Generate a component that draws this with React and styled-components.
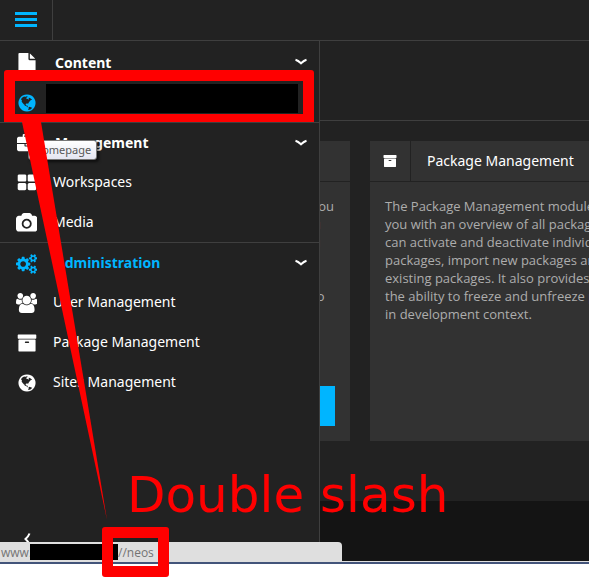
import React from "react";
import styled, { createGlobalStyle, css } from "styled-components";

const colors = {
  panel: "#222222",
  card: "#323232",
  line: "#3f3f3f",
  footer: "#141414",
  accent: "#00b5ff",
  mark: "#ff0000",
};

const GlobalStyle = createGlobalStyle`
  *, *::before, *::after { box-sizing: border-box; }
  body {
    margin: 0;
    background: #ffffff;
    font-family: "Noto Sans", "Open Sans", sans-serif;
    font-size: 14px;
    color: #ffffff;
  }
  button, a { font: inherit; color: inherit; text-decoration: none; }
  h2, p, ul { margin: 0; padding: 0; }
`;

const glyphs = {
  file: [1792, "M1152 512v-472q22 14 36 28l408 408q14 14 28 36h-472zm-128 32q0 40 28 68t68 28h544v1056q0 40-28 68t-68 28h-1344q-40 0-68-28t-28-68v-1600q0-40 28-68t68-28h800v544z"],
  globe: [1792, "M896 128q209 0 385.5 103t279.5 279.5 103 385.5-103 385.5-279.5 279.5-385.5 103-385.5-103-279.5-279.5-103-385.5 103-385.5 279.5-279.5 385.5-103zm274 521q-2 1-9.5 9.5t-13.5 9.5q2 0 4.5-5t5-11 3.5-7q6-7 22-15 14-6 52-12 34-8 51 11-2-2 9.5-13t14.5-12q3-2 15-4.5t15-7.5l2-22q-12 1-17.5-7t-6.5-21q0 2-6 8 0-7-4.5-8t-11.5 1-9 1q-10-3-15-7.5t-8-16.5-4-15q-2-5-9.5-11t-9.5-10q-1-2-2.5-5.5t-3-6.5-4-5.5-5.5-2.5-7 5-7.5 10-4.5 5q-3-2-6-1.5t-4.5 1-4.5 3-5 3.5q-3 2-8.5 3t-8.5 2q15-5-1-11-10-4-16-3 9-4 7.5-12t-8.5-14h5q-1-4-8.5-8.5t-17.5-8.5-13-6q-8-5-34-9.5t-33-.5q-5 6-4.5 10.5t4 14 3.5 12.5q1 6-5.5 13t-6.5 12q0 7 14 15.5t10 21.5q-3 8-16 16t-16 12q-5 8-1.5 18.5t10.5 16.5q2 2 1.5 4t-3.5 4.5-5.5 4-6.5 3.5l-3 2q-11 5-20.5-6t-13.5-26q-7-25-16-30-23-8-29 1-5-13-41-26-25-9-58-4 6-1 0-15-7-15-19-12 3-6 4-17.5t1-13.5q3-13 12-23 1-1 7-8.5t9.5-13.5.5-6q35 4 50-11 5-5 11.5-17t10.5-17q9-6 14-5.5t14.5 5.5 14.5 5q14 1 15.5-11t-7.5-20q12 1 3-17-4-7-8-9-12-4-27 5-8 4 2 8-1-1-9.5 10.5t-16.5 17.5-16-5q-1-1-5.5-13.5t-9.5-13.5q-8 0-16 15 3-8-11-15t-24-8q19-12-8-27-7-4-20.5-5t-19.5 4q-5 7-5.5 11.5t5 8 10.5 5.5 11.5 4 8.5 3q14 10 8 14-2 1-8.5 3.5t-11.5 4.5-6 4q-3 4 0 14t-2 14q-5-5-9-17.5t-7-16.5q7 9-25 6l-10-1q-4 0-16 2t-20.5 1-13.5-8q-4-8 0-20 1-4 4-2-4-3-11-9.5t-10-8.5q-46 15-94 41 6 1 12-1 5-2 13-6.5t10-5.5q34-14 42-7l5-5q14 16 20 25-7-4-30-1-20 6-22 12 7 12 5 18-4-3-11.5-10t-14.5-11-15-5q-16 0-22 1-146 80-235 222 7 7 12 8 4 1 5 9t2.5 11 11.5-3q9 8 3 19 1-1 44 27 19 17 21 21 3 11-10 18-1-2-9-9t-9-4q-3 5 .5 18.5t10.5 12.5q-7 0-9.5 16t-2.5 35.5-1 23.5l2 1q-3 12 5.5 34.5t21.5 19.5q-13 3 20 43 6 8 8 9 3 2 12 7.5t15 10 10 10.5q4 5 10 22.5t14 23.5q-2 6 9.5 20t10.5 23q-1 0-2.5 1t-2.5 1q3 7 15.5 14t15.5 13q1 3 2 10t3 11 8 2q2-20-24-62-15-25-17-29-3-5-5.5-15.5t-4.5-14.5q2 0 6 1.5t8.5 3.5 7.5 4 2 3q-3 7 2 17.5t12 18.5 17 19 12 13q6 6 14 19.5t0 13.5q9 0 20 10t17 20q5 8 8 26t5 24q2 7 8.5 13.5t12.5 9.5l16 8 13 7q5 2 18.5 10.5t21.5 11.5q10 4 16 4t14.5-2.5 13.5-3.5q15-2 29 15t21 21q36 19 55 11-2 1 .5 7.5t8 15.5 9 14.5 5.5 8.5q5 6 18 15t18 15q6-4 7-9-3 8 7 20t18 10q14-3 14-32-31 15-49-18 0-1-2.5-5.5t-4-8.5-2.5-8.5 0-7.5 5-3q9 0 10-3.5t-2-12.5-4-13q-1-8-11-20t-12-15q-5 9-16 8t-16-9q0 1-1.5 5.5t-1.5 6.5q-13 0-15-1 1-3 2.5-17.5t3.5-22.5q1-4 5.5-12t7.5-14.5 4-12.5-4.5-9.5-17.5-2.5q-19 1-26 20-1 3-3 10.5t-5 11.5-9 7q-7 3-24 2t-24-5q-13-8-22.5-29t-9.5-37q0-10 2.5-26.5t3-25-5.5-24.5q3-2 9-9.5t10-10.5q2-1 4.5-1.5t4.5 0 4-1.5 3-6q-1-1-4-3-3-3-4-3 7 3 28.5-1.5t27.5 1.5q15 11 22-2 0-1-2.5-9.5t-.5-13.5q5 27 29 9 3 3 15.5 5t17.5 5q3 2 7 5.5t5.5 4.5 5-.5 8.5-6.5q10 14 12 24 11 40 19 44 7 3 11 2t4.5-9.5 0-14-1.5-12.5l-1-8v-18l-1-8q-15-3-18.5-12t1.5-18.5 15-18.5q1-1 8-3.5t15.5-6.5 12.5-8q21-19 15-35 7 0 11-9-1 0-5-3t-7.5-5-4.5-2q9-5 2-16 5-3 7.5-11t7.5-10q9 12 21 2 7-8 1-16 5-7 20.5-10.5t18.5-9.5q7 2 8-2t1-12 3-12q4-5 15-9t13-5l17-11q3-4 0-4 18 2 31-11 10-11-6-20 3-6-3-9.5t-15-5.5q3-1 11.5-.5t10.5-1.5q15-10-7-16-17-5-43 12zm-163 877q206-36 351-189-3-3-12.5-4.5t-12.5-3.5q-18-7-24-8 1-7-2.5-13t-8-9-12.5-8-11-7q-2-2-7-6t-7-5.5-7.5-4.5-8.5-2-10 1l-3 1q-3 1-5.5 2.5t-5.5 3-4 3 0 2.5q-21-17-36-22-5-1-11-5.5t-10.5-7-10-1.5-11.5 7q-5 5-6 15t-2 13q-7-5 0-17.5t2-18.5q-3-6-10.5-4.5t-12 4.5-11.5 8.5-9 6.5-8.5 5.5-8.5 7.5q-3 4-6 12t-5 11q-2-4-11.5-6.5t-9.5-5.5q2 10 4 35t5 38q7 31-12 48-27 25-29 40-4 22 12 26 0 7-8 20.5t-7 21.5q0 6 2 16z"],
  briefcase: [1792, "M640 256h512v-128h-512v128zm1152 640v480q0 66-47 113t-113 47h-1472q-66 0-113-47t-47-113v-480h672v160q0 26 19 45t45 19h320q26 0 45-19t19-45v-160h672zm-768 0v128h-256v-128h256zm768-480v384h-1792v-384q0-66 47-113t113-47h352v-160q0-40 28-68t68-28h576q40 0 68 28t28 68v160h352q66 0 113 47t47 113z"],
  grid: [1792, "M832 1024v384q0 52-38 90t-90 38h-512q-52 0-90-38t-38-90v-384q0-52 38-90t90-38h512q52 0 90 38t38 90zm0-768v384q0 52-38 90t-90 38h-512q-52 0-90-38t-38-90v-384q0-52 38-90t90-38h512q52 0 90 38t38 90zm896 768v384q0 52-38 90t-90 38h-512q-52 0-90-38t-38-90v-384q0-52 38-90t90-38h512q52 0 90 38t38 90zm0-768v384q0 52-38 90t-90 38h-512q-52 0-90-38t-38-90v-384q0-52 38-90t90-38h512q52 0 90 38t38 90z"],
  camera: [1920, "M960 672q119 0 203.5 84.5t84.5 203.5-84.5 203.5-203.5 84.5-203.5-84.5-84.5-203.5 84.5-203.5 203.5-84.5zm704-416q106 0 181 75t75 181v896q0 106-75 181t-181 75h-1408q-106 0-181-75t-75-181v-896q0-106 75-181t181-75h224l51-136q19-49 69.5-84.5t103.5-35.5h512q53 0 103.5 35.5t69.5 84.5l51 136h224zm-704 1152q185 0 316.5-131.5t131.5-316.5-131.5-316.5-316.5-131.5-316.5 131.5-131.5 316.5 131.5 316.5 316.5 131.5z"],
  cogs: [1920, "M896 896q0-106-75-181t-181-75-181 75-75 181 75 181 181 75 181-75 75-181zm768 512q0-52-38-90t-90-38-90 38-38 90q0 53 37.5 90.5t90.5 37.5 90.5-37.5 37.5-90.5zm0-1024q0-52-38-90t-90-38-90 38-38 90q0 53 37.5 90.5t90.5 37.5 90.5-37.5 37.5-90.5zm-384 421v185q0 10-7 19.5t-16 10.5l-155 24q-11 35-32 76 34 48 90 115 7 11 7 20 0 12-7 19-23 30-82.5 89.5t-78.5 59.5q-11 0-21-7l-115-90q-37 19-77 31-11 108-23 155-7 24-30 24h-186q-11 0-20-7.5t-10-17.5l-23-153q-34-10-75-31l-118 89q-7 7-20 7-11 0-21-8-144-133-144-160 0-9 7-19 10-14 41-53t47-61q-23-44-35-82l-152-24q-10-1-17-9.5t-7-19.5v-185q0-10 7-19.5t16-10.5l155-24q11-35 32-76-34-48-90-115-7-11-7-20 0-12 7-20 22-30 82-89t79-59q11 0 21 7l115 90q34-18 77-32 11-108 23-154 7-24 30-24h186q11 0 20 7.5t10 17.5l23 153q34 10 75 31l118-89q8-7 20-7 11 0 21 8 144 133 144 160 0 8-7 19-12 16-42 54t-45 60q23 48 34 82l152 23q10 2 17 10.5t7 19.5zm640 533v140q0 16-149 31-12 27-30 52 51 113 51 138 0 4-4 7-122 71-124 71-8 0-46-47t-52-68q-20 2-30 2t-30-2q-14 21-52 68t-46 47q-2 0-124-71-4-3-4-7 0-25 51-138-18-25-30-52-149-15-149-31v-140q0-16 149-31 13-29 30-52-51-113-51-138 0-4 4-7 4-2 35-20t59-34 30-16q8 0 46 46.5t52 67.5q20-2 30-2t30 2q51-71 92-112l6-2q4 0 124 70 4 3 4 7 0 25-51 138 17 23 30 52 149 15 149 31zm0-1024v140q0 16-149 31-12 27-30 52 51 113 51 138 0 4-4 7-122 71-124 71-8 0-46-47t-52-68q-20 2-30 2t-30-2q-14 21-52 68t-46 47q-2 0-124-71-4-3-4-7 0-25 51-138-18-25-30-52-149-15-149-31v-140q0-16 149-31 13-29 30-52-51-113-51-138 0-4 4-7 4-2 35-20t59-34 30-16q8 0 46 46.5t52 67.5q20-2 30-2t30 2q51-71 92-112l6-2q4 0 124 70 4 3 4 7 0 25-51 138 17 23 30 52 149 15 149 31z"],
  users: [1920, "M593 896q-162 5-265 128h-134q-82 0-138-40.5t-56-118.5q0-353 124-353 6 0 43.5 21t97.5 42.5 119 21.5q67 0 133-23-5 37-5 66 0 139 81 256zm1071 637q0 120-73 189.5t-194 69.5h-874q-121 0-194-69.5t-73-189.5q0-53 3.5-103.5t14-109 26.5-108.5 43-97.5 62-81 85.5-53.5 111.5-20q10 0 43 21.5t73 48 107 48 135 21.5 135-21.5 107-48 73-48 43-21.5q61 0 111.5 20t85.5 53.5 62 81 43 97.5 26.5 108.5 14 109 3.5 103.5zm-1024-1277q0 106-75 181t-181 75-181-75-75-181 75-181 181-75 181 75 75 181zm704 384q0 159-112.5 271.5t-271.5 112.5-271.5-112.5-112.5-271.5 112.5-271.5 271.5-112.5 271.5 112.5 112.5 271.5zm576 225q0 78-56 118.5t-138 40.5h-134q-103-123-265-128 81-117 81-256 0-29-5-66 66 23 133 23 59 0 119-21.5t97.5-42.5 43.5-21q124 0 124 353zm-128-609q0 106-75 181t-181 75-181-75-75-181 75-181 181-75 181 75 75 181z"],
  archive: [1792, "M1088 832q0-26-19-45t-45-19h-256q-26 0-45 19t-19 45 19 45 45 19h256q26 0 45-19t19-45zm576-192v960q0 26-19 45t-45 19h-1408q-26 0-45-19t-19-45v-960q0-26 19-45t45-19h1408q26 0 45 19t19 45zm64-448v256q0 26-19 45t-45 19h-1536q-26 0-45-19t-19-45v-256q0-26 19-45t45-19h1536q26 0 45 19t19 45z"],
};

const Glyph = ({ name, size = 20 }) => {
  const [width, d] = glyphs[name];
  return (
    <svg height={size} viewBox={`0 0 ${width} 1792`} fill="currentColor" aria-hidden="true">
      <path d={d} />
    </svg>
  );
};

const Desktop = styled.div`
  position: relative;
  min-height: 100vh;
  background: #ffffff;
`;

const Backend = styled.div`
  position: relative;
  background: ${colors.panel};
  border-bottom: 2px solid #43547a;
`;

const TopBar = styled.header`
  display: flex;
  height: 41px;
  border-bottom: 1px solid ${colors.line};
`;

const MenuToggle = styled.button`
  display: flex;
  flex-direction: column;
  align-items: center;
  justify-content: center;
  gap: 3px;
  width: 53px;
  padding: 0 0 2px;
  border: 0;
  border-right: 1px solid ${colors.line};
  background: ${colors.panel};
`;

const MenuBar = styled.span`
  width: 22px;
  height: 3px;
  background: ${colors.accent};
`;

const Body = styled.div`
  position: relative;
  border-bottom: 1px solid #dfdfdf;
`;

const Drawer = styled.nav`
  position: absolute;
  inset: 0 auto 0 0;
  z-index: 1;
  display: flex;
  flex-direction: column;
  width: 320px;
  padding-top: 1px;
  border-right: 1px solid ${colors.line};
  background: ${colors.panel};
`;

const Section = styled.section`
  & + & > :first-child { border-top: 1px solid ${colors.line}; }
`;

const row = css`
  display: flex;
  align-items: center;
  width: 100%;
  height: 40px;
`;

const SectionHead = styled.button`
  ${row}
  padding: 0 11px 0 0;
  border: 0;
  background: none;
  font-weight: 700;
  text-align: left;
  color: ${(p) => (p.$active ? colors.accent : "#ffffff")};
`;

const SectionTitle = styled.span`
  flex: 1;
  padding-left: 2px;
`;

const Item = styled.a`
  ${row}
  color: #ffffff;
`;

const ItemLabel = styled.span`
  padding-bottom: 2px;
`;

const IconSlot = styled.span`
  display: flex;
  justify-content: center;
  width: 53px;
  padding-top: 2px;
  color: ${(p) => (p.$active ? colors.accent : "inherit")};
`;

const Redacted = styled.span`
  width: ${(p) => p.$width};
  height: ${(p) => p.$height};
  background: #000000;
`;

const RedactedName = styled(Redacted)`
  margin: 0 0 8px -7px;
`;

const Collapse = styled.button`
  display: flex;
  align-items: center;
  justify-content: center;
  width: 53px;
  height: 40px;
  margin-top: auto;
  padding: 0 0 4px;
  border: 0;
  background: none;
`;

const Chevron = () => (
  <svg width="14" height="8" viewBox="0 0 14 8" fill="none" stroke="#fff" strokeWidth="2" aria-hidden="true">
    <path d="M1.5 1.8 Q4 2.5 7 5.3 Q10 2.5 12.5 1.8" />
  </svg>
);

const ChevronLeft = () => (
  <svg width="8" height="14" viewBox="0 0 8 14" fill="none" stroke="#fff" strokeWidth="2" aria-hidden="true">
    <path d="M6.5 1.5 Q5.7 4 2.5 7 Q5.7 10 6.5 12.5" />
  </svg>
);

const SubBar = styled.div`
  height: 80px;
  border-bottom: 1px solid ${colors.line};
`;

const Modules = styled.main`
  display: grid;
  grid-template-columns: repeat(2, 300px);
  gap: 20px;
  padding: 20px 0 60px 50px;
  overflow: hidden;
`;

const Card = styled.article`
  display: flex;
  flex-direction: column;
  min-height: 300px;
  background: ${colors.card};
`;

const CardHead = styled.div`
  display: flex;
  height: 41px;
  border-bottom: 1px solid ${colors.panel};
`;

const CardIcon = styled.span`
  display: flex;
  align-items: center;
  justify-content: center;
  width: 41px;
  border-right: 1px solid ${colors.panel};
`;

const CardTitle = styled.h2`
  padding-left: 16px;
  font-size: 14px;
  font-weight: 400;
  line-height: 40px;
`;

const CardText = styled.p`
  padding: 15px;
  font-family: "Open Sans", "Noto Sans", sans-serif;
  font-size: 13px;
  line-height: 18px;
  color: #adadad;
`;

const CardAction = styled.button`
  align-self: flex-end;
  width: 80px;
  height: 40px;
  margin: auto 15px 15px;
  border: 0;
  background: ${colors.accent};
`;

const Footer = styled.footer`
  height: 60px;
  background: ${colors.footer};
`;

const StatusBar = styled.div`
  position: absolute;
  left: 0;
  bottom: 0;
  z-index: 2;
  display: flex;
  align-items: center;
  width: 342px;
  height: 20px;
  padding-left: 1px;
  border-top-right-radius: 4px;
  background: #dfdfdf;
  font-family: "Open Sans", "Noto Sans", sans-serif;
  font-size: 12px;
  color: #747474;
`;

const Host = styled.span`
  width: 29px;
`;

const Tooltip = styled.div`
  position: absolute;
  left: 28px;
  top: 140px;
  z-index: 2;
  height: 20px;
  padding: 0 5px;
  border: 1px solid #767676;
  border-radius: 3px;
  background: linear-gradient(#ffffff, #e4e5f0);
  box-shadow: 2px 2px 3px rgba(0, 0, 0, 0.6);
  font-size: 11px;
  line-height: 18px;
  color: #575757;
`;

const Frame = styled.div`
  position: absolute;
  z-index: 4;
  left: ${(p) => p.$x}px;
  top: ${(p) => p.$y}px;
  width: ${(p) => p.$w}px;
  height: ${(p) => p.$h}px;
  border: 11px solid ${colors.mark};
  border-bottom-width: ${(p) => p.$base || 11}px;
  border-radius: ${(p) => (p.$base ? "3px 3px 0 0" : "3px")};
`;

const Wedge = styled.svg`
  position: absolute;
  left: 22px;
  top: 122px;
  z-index: 3;
`;

const Remark = styled.div`
  position: absolute;
  left: 127px;
  top: 465px;
  z-index: 3;
  font-family: "DejaVu Sans", sans-serif;
  font-size: 50px;
  line-height: 60px;
  white-space: nowrap;
  color: ${colors.mark};
`;

const sections = [
  { title: "Content", icon: "file", items: [{ icon: "globe", hidden: true }] },
  {
    title: "Management",
    icon: "briefcase",
    items: [{ icon: "grid", label: "Workspaces" }, { icon: "camera", label: "Media" }],
  },
  {
    title: "Administration",
    icon: "cogs",
    active: true,
    items: [
      { icon: "users", label: "User Management" },
      { icon: "archive", label: "Package Management" },
      { icon: "globe", label: "Sites Management" },
    ],
  },
];

const modules = [
  {
    title: "User Management",
    icon: "users",
    action: "Open",
    text: "The User Management module provides you with an overview of all backend users. You can group them by their properties so you are able to monitor their permissions, filemounts, member groups etc.. This module is an indispensable tool in order to make sure the users are correctly configured.",
  },
  {
    title: "Package Management",
    icon: "archive",
    text: "The Package Management module provides you with an overview of all packages. You can activate and deactivate individual packages, import new packages and delete existing packages. It also provides you with the ability to freeze and unfreeze packages in development context.",
  },
];

export default function App() {
  return (
    <Desktop>
      <GlobalStyle />
      <Backend>
        <TopBar>
          <MenuToggle aria-label="Menu">
            <MenuBar />
            <MenuBar />
            <MenuBar />
          </MenuToggle>
        </TopBar>
        <Body>
          <Drawer>
            {sections.map((s) => (
              <Section key={s.title}>
                <SectionHead $active={s.active}>
                  <IconSlot><Glyph name={s.icon} /></IconSlot>
                  <SectionTitle>{s.title}</SectionTitle>
                  <Chevron />
                </SectionHead>
                {s.items.map((item) => (
                  <Item key={item.icon} href="#" aria-label={item.hidden ? "Homepage" : undefined}>
                    <IconSlot $active={item.hidden}><Glyph name={item.icon} /></IconSlot>
                    {item.hidden ? (
                      <RedactedName $width="252px" $height="29px" />
                    ) : (
                      <ItemLabel>{item.label}</ItemLabel>
                    )}
                  </Item>
                ))}
              </Section>
            ))}
            <Collapse aria-label="Collapse menu"><ChevronLeft /></Collapse>
          </Drawer>
          <SubBar />
          <Modules>
            {modules.map((m) => (
              <Card key={m.title}>
                <CardHead>
                  <CardIcon><Glyph name={m.icon} size={14} /></CardIcon>
                  <CardTitle>{m.title}</CardTitle>
                </CardHead>
                <CardText>{m.text}</CardText>
                {m.action && <CardAction>{m.action}</CardAction>}
              </Card>
            ))}
          </Modules>
          <Footer />
        </Body>
        <StatusBar>
          <Host>www.</Host>
          <Redacted $width="88px" $height="16px" />
          <span>//neos</span>
        </StatusBar>
        <Tooltip role="tooltip">Homepage</Tooltip>
        <Wedge width="86" height="400" viewBox="0 0 86 400" fill={colors.mark} aria-hidden="true">
          <path d="M0 0H19L85 398Z" />
        </Wedge>
        <Frame $x={4} $y={70} $w={310} $h={52} $base={8} />
        <Frame $x={102} $y={527} $w={67} $h={50} />
        <Remark>Double slash</Remark>
      </Backend>
    </Desktop>
  );
}
